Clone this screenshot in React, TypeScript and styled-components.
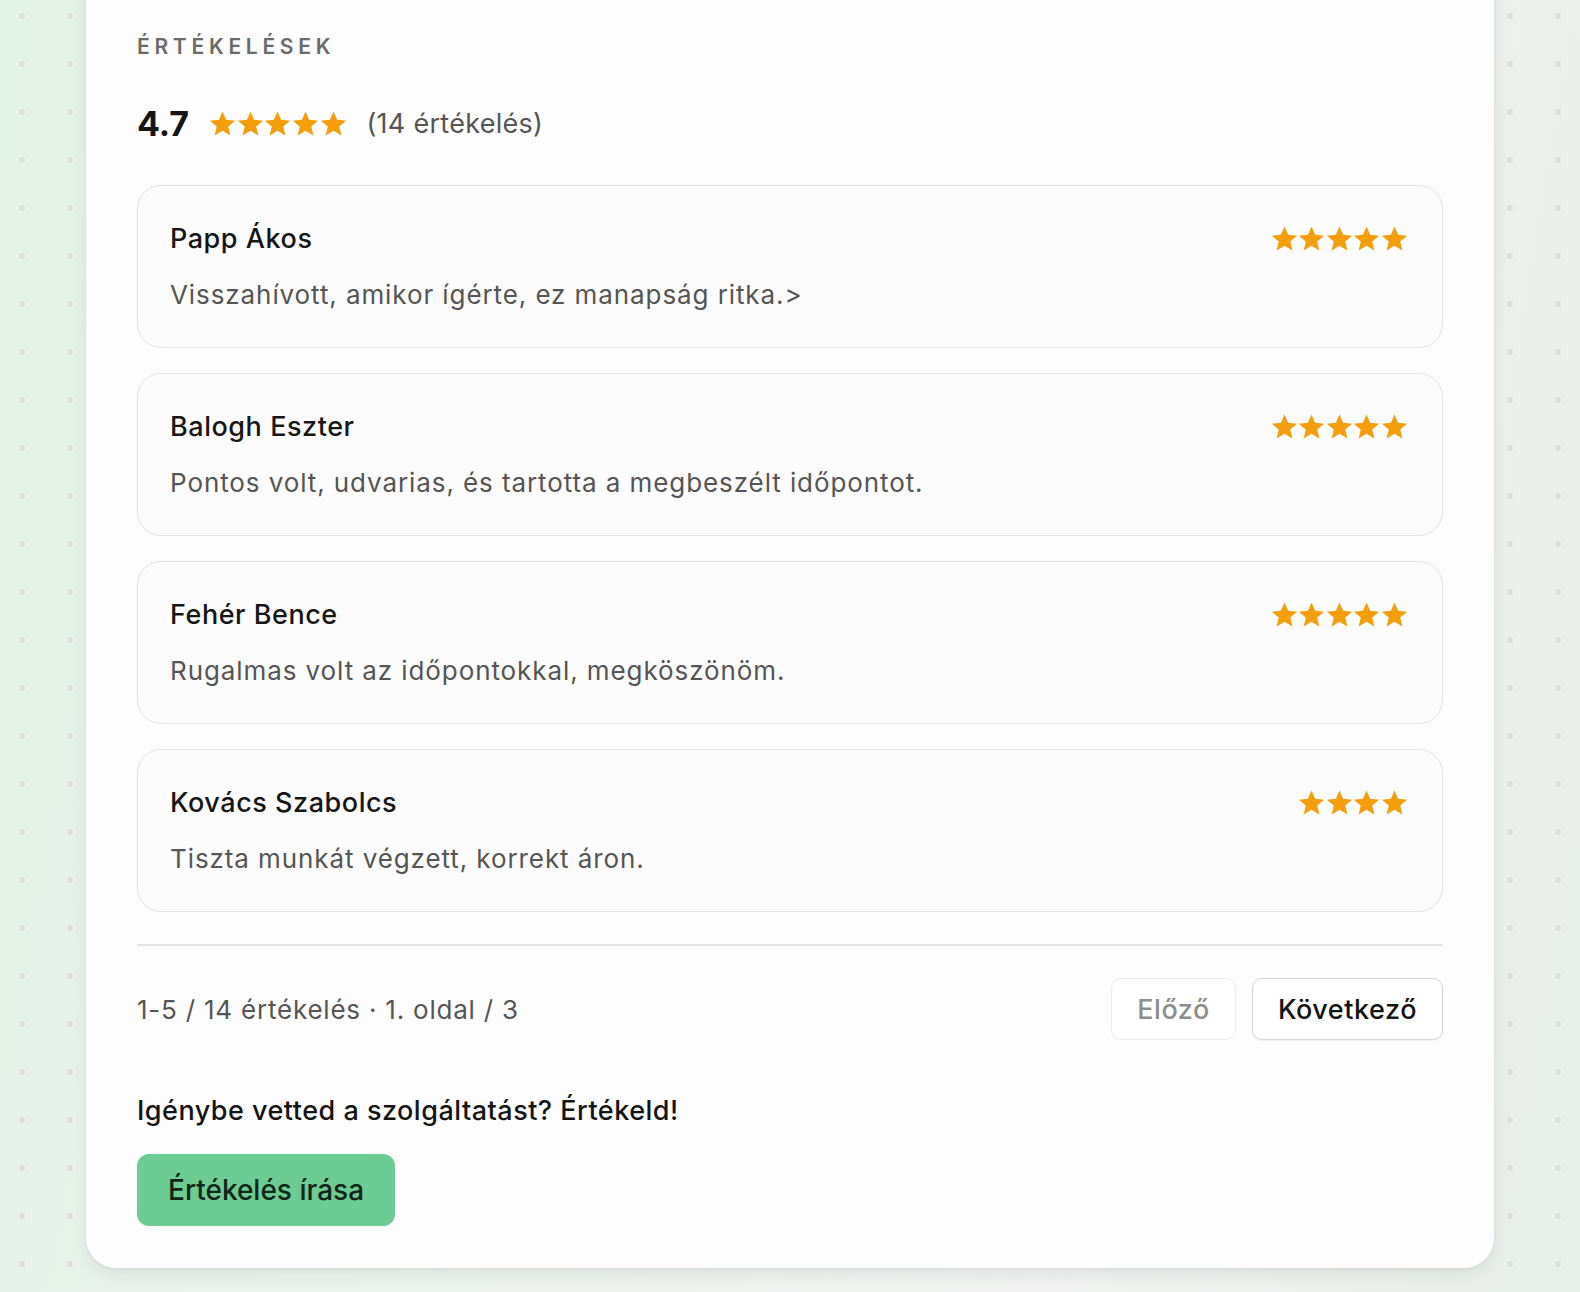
import React from 'react';
import styled, { createGlobalStyle } from 'styled-components';

const GlobalStyle = createGlobalStyle`
  html, body {
    margin: 0;
    padding: 0;
  }
  body {
    font-family: Inter, "Noto Sans", Arial, sans-serif;
    color: #151515;
    background-color: #eef1ef;
    background-image:
      radial-gradient(circle, #dcdfdd 0, #dcdfdd 2.6px, transparent 3.2px),
      linear-gradient(100deg, #e3f2e7 0%, #edf2ee 40%, #f1f2f1 70%, #e8eee9 100%);
    background-size: 48px 48px, 100% 100%;
    background-position: -2px -8px, 0 0;
    min-height: 1292px;
  }
`;

interface Review {
  name: string;
  text: string;
  rating: number;
}

const reviews: Array<Review> = [
  { name: 'Papp Ákos', text: 'Visszahívott, amikor ígérte, ez manapság ritka.>', rating: 5 },
  { name: 'Balogh Eszter', text: 'Pontos volt, udvarias, és tartotta a megbeszélt időpontot.', rating: 5 },
  { name: 'Fehér Bence', text: 'Rugalmas volt az időpontokkal, megköszönöm.', rating: 5 },
  { name: 'Kovács Szabolcs', text: 'Tiszta munkát végzett, korrekt áron.', rating: 4 },
];

const Page = styled.div`
  padding: 0 86px 25px;
`;

const Card = styled.section`
  margin-top: -40px;
  padding: 73px 51px 42px;
  background: #fdfdfd;
  border-radius: 30px;
  box-shadow: 0 6px 18px rgba(30, 40, 35, 0.08), 0 1px 3px rgba(30, 40, 35, 0.06);
`;

const Title = styled.h2`
  margin: 0;
  font-size: 21px;
  line-height: 28px;
  font-weight: 600;
  letter-spacing: 0.225em;
  color: #6b6b6b;
`;

const Summary = styled.div`
  display: flex;
  align-items: center;
  gap: 20px;
  margin-top: 42px;
  height: 41px;
`;

const Score = styled.span`
  font-size: 34px;
  font-weight: 700;
  line-height: 41px;
  color: #141414;
`;

const Count = styled.span`
  font-size: 27px;
  letter-spacing: 0.01em;
  color: #555;
`;

const StarRow = styled.div`
  display: flex;
  gap: 0.6px;
`;

const StarSvg = styled.svg`
  width: 27px;
  height: 26px;
  display: block;
`;

const Star: React.FC = () => (
  <StarSvg viewBox="0 0 24 23">
    <path
      d="M12 0.4l3.2 7.4 8 .7-6.1 5.3 1.9 7.9L12 17.5l-7 4.2 1.9-7.9-6.1-5.3 8-.7z"
      fill="#f59e0b"
    />
  </StarSvg>
);

const Stars: React.FC<{ count: number }> = ({ count }) => (
  <StarRow>
    {Array.from({ length: count }).map((_, i) => (
      <Star key={i} />
    ))}
  </StarRow>
);

const List = styled.div`
  display: flex;
  flex-direction: column;
  gap: 25px;
  margin-top: 41px;
`;

const ReviewCard = styled.article`
  border: 1.5px solid #e3e3e3;
  border-radius: 24px;
  background: #fcfcfc;
  padding: 34px 34px 34px 32px;
`;

const ReviewHead = styled.div`
  display: flex;
  justify-content: space-between;
  align-items: center;
`;

const Name = styled.div`
  font-size: 27px;
  line-height: 38px;
  font-weight: 500;
  letter-spacing: 0.02em;
  color: #161616;
`;

const Text = styled.p`
  margin: 19px 0 0;
  font-size: 26px;
  line-height: 36px;
  letter-spacing: 0.035em;
  color: #555;
`;

const Divider = styled.hr`
  margin: 32px 0 0;
  border: none;
  border-top: 2px solid #e4e4e4;
`;

const Pager = styled.div`
  display: flex;
  align-items: center;
  justify-content: space-between;
  margin-top: 32px;
`;

const PagerInfo = styled.span`
  font-size: 26px;
  letter-spacing: 0.03em;
  color: #555;
`;

const PagerButtons = styled.div`
  display: flex;
  gap: 16px;
`;

const PagerButton = styled.button<{ $disabled?: boolean }>`
  height: 62px;
  padding: 0 25px;
  border-radius: 10px;
  font-family: inherit;
  font-size: 27px;
  font-weight: 500;
  letter-spacing: 0.02em;
  background: #fff;
  border: 1.5px solid ${(p) => (p.$disabled ? '#ececec' : '#d6d6d6')};
  color: ${(p) => (p.$disabled ? '#8d8d8d' : '#141414')};
  box-shadow: ${(p) => (p.$disabled ? 'none' : '0 1px 2px rgba(0,0,0,0.06)')};
`;

const Prompt = styled.div`
  margin-top: 52px;
  font-size: 27px;
  line-height: 38px;
  font-weight: 500;
  letter-spacing: 0.018em;
  color: #141414;
`;

const WriteButton = styled.button`
  margin-top: 24px;
  height: 72px;
  padding: 0 31px;
  border: none;
  border-radius: 12px;
  background: #6dcb94;
  color: #0f2619;
  font-family: inherit;
  font-size: 28px;
  font-weight: 500;
`;

const App: React.FC = () => {
  return (
    <>
      <GlobalStyle />
      <Page>
        <Card>
          <Title>ÉRTÉKELÉSEK</Title>
          <Summary>
            <Score>4.7</Score>
            <Stars count={5} />
            <Count>(14 értékelés)</Count>
          </Summary>
          <List>
            {reviews.map((r, i) => (
              <ReviewCard key={i}>
                <ReviewHead>
                  <Name>{r.name}</Name>
                  <Stars count={r.rating} />
                </ReviewHead>
                <Text>{r.text}</Text>
              </ReviewCard>
            ))}
          </List>
          <Divider />
          <Pager>
            <PagerInfo>1-5 / 14 értékelés · 1. oldal / 3</PagerInfo>
            <PagerButtons>
              <PagerButton $disabled>Előző</PagerButton>
              <PagerButton>Következő</PagerButton>
            </PagerButtons>
          </Pager>
          <Prompt>Igénybe vetted a szolgáltatást? Értékeld!</Prompt>
          <WriteButton>Értékelés írása</WriteButton>
        </Card>
      </Page>
    </>
  );
};

export default App;
